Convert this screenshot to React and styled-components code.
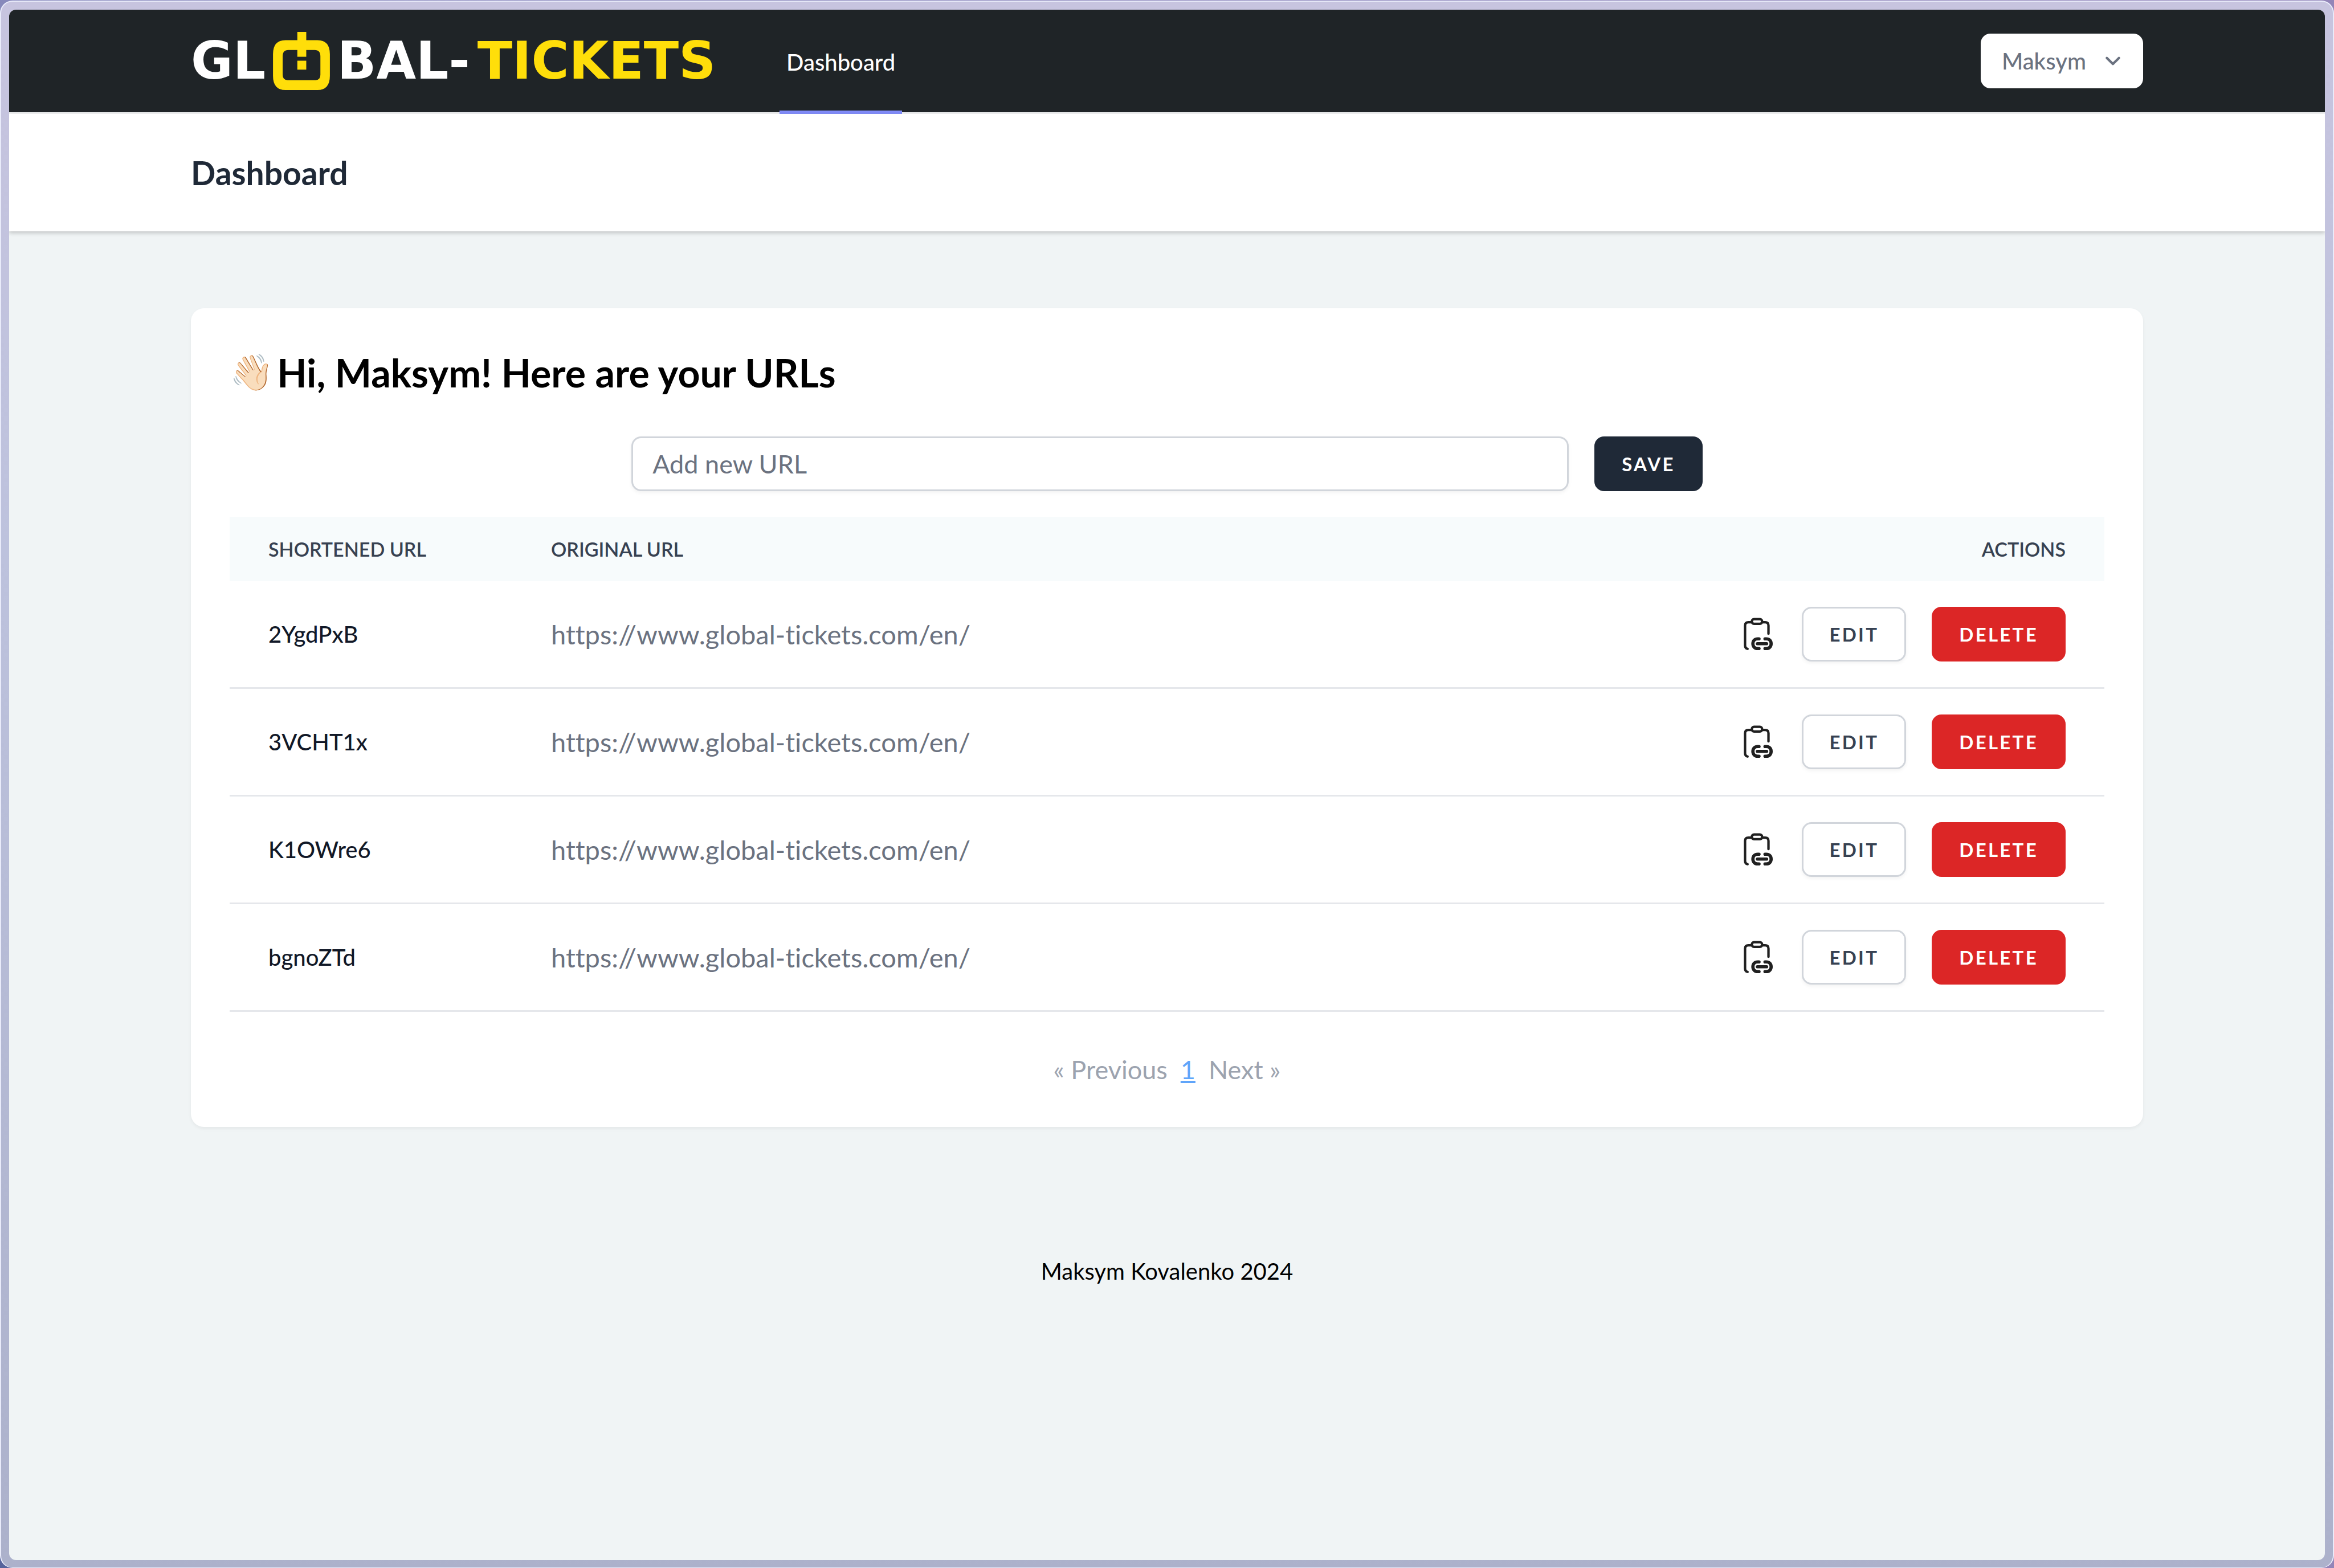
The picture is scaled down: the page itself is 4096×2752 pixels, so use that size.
import React, { useState } from "react";
import styled, { createGlobalStyle, css } from "styled-components";

const GlobalStyle = createGlobalStyle`
  *, *::before, *::after { box-sizing: border-box; }
  body {
    margin: 0;
    font-family: Lato, "Liberation Sans", sans-serif;
    font-size: 45px;
    line-height: 68px;
    font-variant-ligatures: none;
    color: #000;
  }
  h1, h2, p { margin: 0; }
  button, input { margin: 0; font: inherit; }
  button { cursor: pointer; }
  a { color: inherit; text-decoration: none; }
`;

const Desktop = styled.div`
  min-height: 100vh;
  display: flex;
  background: linear-gradient(90deg, rgba(147, 133, 184, 0) 0%, #9385b8 100%),
    linear-gradient(180deg, #8789bb 0%, #56639c 100%);
`;

const Bezel = styled.div`
  flex: 1;
  display: flex;
  margin-top: 1px;
  padding: 14px 14px 13px;
  border: 2px solid #e9ebfa;
  border-bottom-width: 1px;
  border-radius: 22px;
  background: linear-gradient(180deg, #c7c4df 0%, #bdc2dd 35%, #acb1cb 100%);
`;

const Page = styled.div`
  flex: 1;
  display: flex;
  flex-direction: column;
  overflow: hidden;
  border-radius: 12px;
  background: #f0f4f5;
`;

const Container = styled.div`
  width: 100%;
  max-width: 3562px;
  margin: 0 auto;
  padding: 0 68px;
  display: flex;
`;

const NavBar = styled.nav`
  background: #1f2427;
  border-bottom: 3px solid #f1f2f3;
`;

const NavRow = styled(Container)`
  height: 180px;
  align-items: center;
`;

const LogoLink = styled.a`
  width: 921px;
  margin-right: 112px;
  display: flex;
  align-items: center;
  justify-content: space-between;
  font-family: "DejaVu Sans", sans-serif;
  font-size: 90px;
  font-weight: 700;
  line-height: 102px;
`;

const LogoText = styled.span`
  color: ${(p) => (p.$accent ? "#ffde0a" : "#fff")};
`;

const LogoMark = styled.svg`
  width: 100px;
  height: 102px;
  display: block;
`;

const NavLink = styled.a`
  align-self: stretch;
  display: flex;
  align-items: center;
  margin-bottom: -3px;
  padding: 6px 12px 0;
  border-bottom: 6px solid #818cf8;
  font-size: 40px;
  font-weight: 500;
  line-height: 56px;
  color: #fff;
`;

const UserButton = styled.button`
  height: 96px;
  margin-left: auto;
  padding: 0 37px;
  display: flex;
  align-items: center;
  gap: 31px;
  border: 0;
  border-radius: 17px;
  background: #fff;
  font-size: 40px;
  font-weight: 500;
  line-height: 56px;
  color: #6b7280;
`;

const Chevron = styled.svg`
  width: 32px;
  height: 32px;
`;

const PageHeader = styled.header`
  position: relative;
  background: #fff;
  box-shadow: 0 3px 8px rgba(0, 0, 0, 0.1), 0 3px 6px rgba(0, 0, 0, 0.1);
`;

const HeaderTitle = styled.h2`
  padding: 68px 0;
  font-size: 57px;
  font-weight: 700;
  line-height: 70px;
  color: #1f2937;
`;

const Main = styled.main`
  padding: 135px 0;
`;

const Card = styled.section`
  flex: 1;
  min-width: 0;
  padding: 68px 68px 67px;
  border-radius: 23px;
  background: #fff;
  box-shadow: 0 3px 6px rgba(0, 0, 0, 0.05);
`;

const Greeting = styled.h1`
  display: flex;
  align-items: center;
  gap: 6px;
  margin-bottom: 67px;
  font-size: 68px;
  font-weight: 700;
  line-height: 90px;
`;

const Emoji = styled.span`
  font-family: "Noto Color Emoji", sans-serif;
  font-size: 62px;
`;

const UrlForm = styled.form`
  display: flex;
  justify-content: center;
  gap: 45px;
  margin-bottom: 45px;
`;

const UrlInput = styled.input`
  width: 50%;
  height: 96px;
  padding: 0 34px;
  border: 3px solid #d1d5db;
  border-radius: 17px;
  background: #fff;
  box-shadow: 0 3px 6px rgba(0, 0, 0, 0.05);
  color: #111827;
  &::placeholder { color: #6b7280; opacity: 1; }
`;

const variants = {
  dark: css`
    background: #1f2937;
    border-color: #1f2937;
    color: #fff;
  `,
  outline: css`
    background: #fff;
    border-color: #d1d5db;
    color: #374151;
    box-shadow: 0 3px 6px rgba(0, 0, 0, 0.05);
  `,
  danger: css`
    background: #dc2626;
    border-color: #dc2626;
    color: #fff;
  `,
};

const Button = styled.button`
  height: 96px;
  padding: 0 45px;
  border: 3px solid;
  border-radius: 17px;
  font-size: 33px;
  font-weight: 700;
  line-height: 45px;
  letter-spacing: 0.1em;
  text-transform: uppercase;
  ${(p) => variants[p.$variant]}
`;

const IconButton = styled.button`
  width: 68px;
  height: 68px;
  padding: 0;
  border: 0;
  background: none;
  svg { display: block; width: 68px; height: 68px; }
`;

const Table = styled.table`
  width: 100%;
  margin-bottom: 67px;
  table-layout: fixed;
  border-collapse: separate;
  border-spacing: 0;
`;

const HeadCell = styled.th`
  width: ${(p) => p.$width || "auto"};
  padding: 34px 68px;
  background: #f7fbfc;
  text-align: ${(p) => (p.$end ? "right" : "left")};
  font-size: 34px;
  font-weight: 600;
  line-height: 45px;
  text-transform: uppercase;
  color: #374151;
`;

const rowCell = css`
  padding: 45px 68px;
  border-bottom: 3px solid #e5e7eb;
  text-align: left;
`;

const CodeCell = styled.th`
  ${rowCell}
  font-size: 40px;
  font-weight: 500;
  color: #111827;
`;

const UrlCell = styled.td`
  ${rowCell}
  font-size: 47px;
  color: #6b7280;
`;

const ActionsCell = styled.td`
  ${rowCell}
`;

const Actions = styled.div`
  display: flex;
  align-items: center;
  justify-content: flex-end;
  gap: 45px;
`;

const Pagination = styled.nav`
  display: flex;
  justify-content: center;
  gap: 23px;
  color: #9ca3af;
`;

const PageLink = styled.a`
  color: #60a5fa;
  text-decoration: underline;
`;

const Footer = styled.footer`
  padding: 84px 68px;
  text-align: center;
  font-size: 40px;
`;

const Logo = () => (
  <LogoLink href="#" aria-label="Global-Tickets">
    <LogoText>GL</LogoText>
    <LogoMark viewBox="0 0 318 325" fill="#ffde0a" aria-hidden="true">
      <path
        fillRule="evenodd"
        d="M70 46H248Q318 46 318 124V246Q318 325 248 325H70Q0 325 0 246V124Q0 46 70 46ZM86 101Q54 101 54 136V240Q54 270 82 270H238Q265 270 265 240V136Q265 101 233 101Z"
      />
      <rect x="136" width="50" height="139" />
      <rect x="136" y="161" width="50" height="50" />
    </LogoMark>
    <LogoText>BAL-</LogoText>
    <LogoText $accent>TICKETS</LogoText>
  </LogoLink>
);

const ClipboardLink = () => (
  <svg viewBox="0 0 24 24" fill="none" stroke="#202020" strokeLinecap="round" strokeLinejoin="round" aria-hidden="true">
    <g strokeWidth="1.5">
      <path d="M6.3 21.1C5.2 20.9 4.75 20.2 4.75 18.9V6.6C4.75 5.2 5.4 4.6 6.8 4.6H8.7" />
      <path d="M15.4 4.6H17.2C18.6 4.6 19.25 5.2 19.25 6.6V11.7" />
      <rect x="8.95" y="2.7" width="6.35" height="2.9" rx="1.35" />
    </g>
    <g strokeWidth="2">
      <path d="M13.4 14.9H12.6C10.8 14.9 9.6 16.1 9.6 17.9S10.8 20.9 12.6 20.9H13.4" />
      <path d="M17.1 14.9H17.9C19.7 14.9 20.9 16.1 20.9 17.9S19.7 20.9 17.9 20.9H17.1" />
      <path d="M12.4 17.9H18.1" />
    </g>
  </svg>
);

const urls = [
  { code: "2YgdPxB", original: "https://www.global-tickets.com/en/" },
  { code: "3VCHT1x", original: "https://www.global-tickets.com/en/" },
  { code: "K1OWre6", original: "https://www.global-tickets.com/en/" },
  { code: "bgnoZTd", original: "https://www.global-tickets.com/en/" },
];

export default function App() {
  const [url, setUrl] = useState("");

  return (
    <Desktop>
      <GlobalStyle />
      <Bezel>
        <Page>
          <NavBar>
            <NavRow>
              <Logo />
              <NavLink href="#" aria-current="page">Dashboard</NavLink>
              <UserButton type="button" aria-haspopup="menu">
                Maksym
                <Chevron viewBox="0 0 30 30" fill="none" stroke="currentColor" strokeWidth="4" strokeLinecap="round" strokeLinejoin="round" aria-hidden="true">
                  <path d="M5 10L15 20L25 10" />
                </Chevron>
              </UserButton>
            </NavRow>
          </NavBar>

          <PageHeader>
            <Container>
              <HeaderTitle>Dashboard</HeaderTitle>
            </Container>
          </PageHeader>

          <Main>
            <Container>
              <Card>
                <Greeting>
                  <Emoji>👋🏻</Emoji>
                  Hi, Maksym! Here are your URLs
                </Greeting>

                <UrlForm onSubmit={(e) => e.preventDefault()}>
                  <UrlInput
                    type="text"
                    aria-label="Add new URL"
                    placeholder="Add new URL"
                    value={url}
                    onChange={(e) => setUrl(e.target.value)}
                  />
                  <Button type="submit" $variant="dark">Save</Button>
                </UrlForm>

                <Table>
                  <thead>
                    <tr>
                      <HeadCell scope="col" $width="496px">Shortened URL</HeadCell>
                      <HeadCell scope="col">Original URL</HeadCell>
                      <HeadCell scope="col" $end>Actions</HeadCell>
                    </tr>
                  </thead>
                  <tbody>
                    {urls.map((item) => (
                      <tr key={item.code}>
                        <CodeCell scope="row">{item.code}</CodeCell>
                        <UrlCell>{item.original}</UrlCell>
                        <ActionsCell>
                          <Actions>
                            <IconButton type="button" aria-label="Copy link">
                              <ClipboardLink />
                            </IconButton>
                            <Button type="button" $variant="outline">Edit</Button>
                            <Button type="button" $variant="danger">Delete</Button>
                          </Actions>
                        </ActionsCell>
                      </tr>
                    ))}
                  </tbody>
                </Table>

                <Pagination aria-label="Pagination">
                  <span>« Previous</span>
                  <PageLink href="#" aria-current="page">1</PageLink>
                  <span>Next »</span>
                </Pagination>
              </Card>
            </Container>
          </Main>

          <Footer>Maksym Kovalenko 2024</Footer>
        </Page>
      </Bezel>
    </Desktop>
  );
}
